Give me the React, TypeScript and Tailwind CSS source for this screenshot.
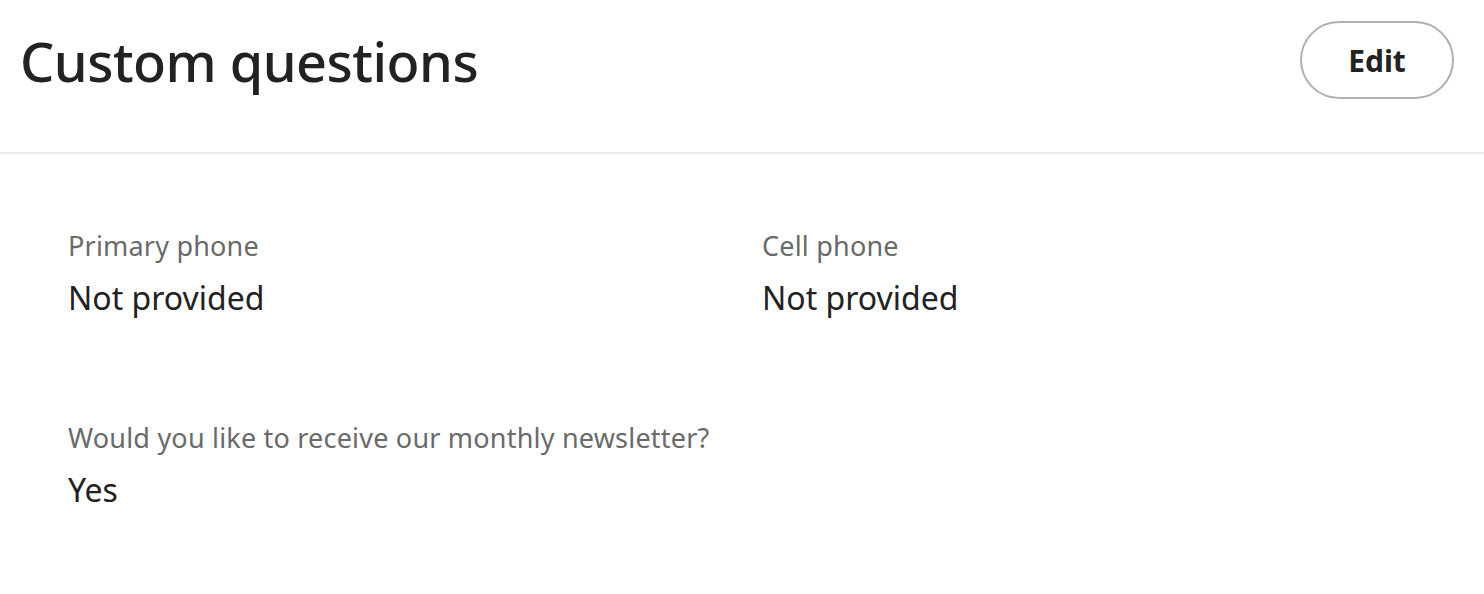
const FONT = { fontFamily: '"Noto Sans", "Open Sans", Arial, sans-serif' };

type Field = { label: string; value: string };

const rows: Field[][] = [
  [
    { label: "Primary phone", value: "Not provided" },
    { label: "Cell phone", value: "Not provided" },
  ],
  [{ label: "Would you like to receive our monthly newsletter?", value: "Yes" }],
];

function FieldItem({ label, value }: Field) {
  return (
    <div className="flex flex-col gap-[14px]">
      <div className="text-[27px] leading-[36px] tracking-[0.2px] text-[#6a6a6a]">{label}</div>
      <div className="text-[32px] leading-[40px] text-[#222222]">{value}</div>
    </div>
  );
}

export default function App() {
  return (
    <div className="h-[594px] w-[1484px] bg-white" style={FONT}>
      {/* Section header */}
      <div className="flex h-[154px] items-start justify-between border-b-2 border-[#ebebeb] pl-[20px] pr-[30px] pt-[21px]">
        <h1 className="mt-[5px] text-[54px] font-medium leading-[70px] tracking-[-0.5px] text-[#222222]">
          Custom questions
        </h1>
        <button className="flex h-[78px] w-[154px] items-center justify-center rounded-full border-2 border-[#b0b0b0] text-[30px] font-bold text-[#222222]">
          Edit
        </button>
      </div>

      {/* Answers */}
      <div className="flex flex-col gap-[102px] pl-[68px] pt-[74px]">
        {rows.map((row, i) => (
          <div key={i} className="grid grid-cols-[694px_1fr]">
            {row.map((f) => (
              <FieldItem key={f.label} {...f} />
            ))}
          </div>
        ))}
      </div>
    </div>
  );
}
